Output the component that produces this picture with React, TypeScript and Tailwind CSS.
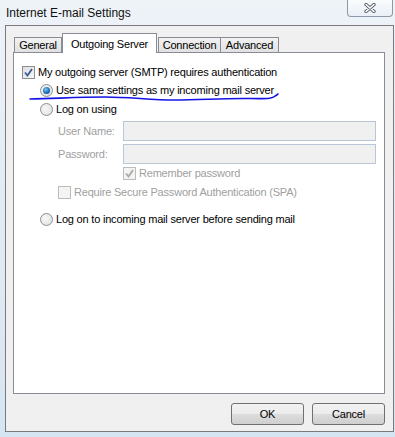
import React from 'react';

const font = { fontFamily: '"Segoe UI", "Liberation Sans", Arial, sans-serif' };

function CheckBox({ checked = false, disabled = false }: { checked?: boolean; disabled?: boolean }) {
  return (
    <div
      className={`w-[13px] h-[13px] shrink-0 border flex items-center justify-center ${
        disabled
          ? 'border-[#bcbcbc] bg-[#f4f4f4]'
          : 'border-[#8e8f8f] bg-[linear-gradient(135deg,#dcdfe3_0%,#f6f6f6_100%)]'
      }`}
    >
      {checked && (
        <svg width="9" height="9" viewBox="0 0 9 9">
          <path
            d="M1 4.5 L3.5 7.5 L8 1"
            fill="none"
            stroke={disabled ? '#a8a8a8' : '#3d5a98'}
            strokeWidth="1.8"
          />
        </svg>
      )}
    </div>
  );
}

function Radio({ selected = false }: { selected?: boolean }) {
  return (
    <div className="w-[13px] h-[13px] shrink-0 rounded-full border border-[#8e8f8f] bg-[radial-gradient(circle_at_40%_40%,#f8f8f8_0%,#d9dcdf_100%)] flex items-center justify-center">
      {selected && (
        <div className="w-[7px] h-[7px] rounded-full bg-[radial-gradient(circle_at_40%_35%,#7fc6f5_0%,#1a6fb5_55%,#0c3f78_100%)]" />
      )}
    </div>
  );
}

function Field() {
  return <div className="w-[253px] h-[20px] border border-[#b7c7d8] bg-[#f0f0f0]" />;
}

export default function App() {
  return (
    <div
      className="relative w-[395px] h-[437px] overflow-hidden bg-[linear-gradient(180deg,#eef3f8_0%,#e3ecf4_40%,#d6e5f2_100%)] text-[11px] tracking-[-0.2px] text-black"
      style={font}
    >
      {/* Title bar */}
      <div className="h-[25px] flex items-start justify-between">
        <div className="pl-[6px] pt-[4px] text-[12px] tracking-normal text-[#111]">Internet E-mail Settings</div>
        <div className="mr-[2px] w-[46px] h-[17px] rounded-b-[4px] border border-t-0 border-[#8d99a8] bg-[linear-gradient(180deg,rgba(255,255,255,0.7),rgba(230,238,246,0.6))] flex items-center justify-center">
          <svg width="14" height="10" viewBox="0 0 14 10">
            <path d="M3 1.5 L11 8.5 M11 1.5 L3 8.5" stroke="#5a6270" strokeWidth="3.4" strokeLinecap="round" />
            <path d="M3 1.5 L11 8.5 M11 1.5 L3 8.5" stroke="#ffffff" strokeWidth="1.6" strokeLinecap="round" />
          </svg>
        </div>
      </div>

      {/* Client area */}
      <div className="ml-[5px] w-[389px] h-[407px] border border-[#7b7b7b] bg-[#f0f0f0] flex flex-col">
        <div className="pl-[7px] pr-[8px] pt-[7px] flex flex-col">
          {/* Tabs */}
          <div className="flex h-[20px] pl-[1px]">
            <div className="mt-[4px] w-[48px] h-[15px] border border-b-0 border-[#898c95] bg-[linear-gradient(180deg,#f2f2f2,#e1e1e1)] flex items-center justify-center">
              General
            </div>
            <div className="relative z-10 w-[95px] h-[20px] border border-b-0 border-[#898c95] bg-white flex items-start justify-center pt-[2px]">
              Outgoing Server
            </div>
            <div className="mt-[4px] ml-[1px] w-[63px] h-[15px] border border-b-0 border-[#898c95] bg-[linear-gradient(180deg,#f2f2f2,#e1e1e1)] flex items-center justify-center">
              Connection
            </div>
            <div className="mt-[4px] w-[58px] h-[15px] border border-b-0 border-l-0 border-[#898c95] bg-[linear-gradient(180deg,#f2f2f2,#e1e1e1)] flex items-center justify-center">
              Advanced
            </div>
          </div>

          {/* Panel */}
          <div className="-mt-px w-[372px] h-[342px] border border-[#898c95] bg-white flex flex-col pl-[8px]">
            <div className="mt-[13px] h-[13px] flex items-center gap-[3px]">
              <CheckBox checked />
              <span>My outgoing server (SMTP) requires authentication</span>
            </div>
            <div className="mt-[5px] h-[13px] flex items-center gap-[3px] pl-[18px]">
              <Radio selected />
              <span>Use same settings as my incoming mail server</span>
            </div>
            <div className="mt-[6px] h-[13px] flex items-center gap-[3px] pl-[18px]">
              <Radio />
              <span>Log on using</span>
            </div>
            <div className="mt-[5px] h-[20px] flex items-center pl-[36px]">
              <span className="w-[65px] text-[#a0a0a0]">User Name:</span>
              <Field />
            </div>
            <div className="mt-[3px] h-[20px] flex items-center pl-[36px]">
              <span className="w-[65px] text-[#a0a0a0]">Password:</span>
              <Field />
            </div>
            <div className="mt-[3px] h-[13px] flex items-center gap-[3px] pl-[101px]">
              <CheckBox checked disabled />
              <span className="text-[#a0a0a0]">Remember password</span>
            </div>
            <div className="mt-[6px] h-[13px] flex items-center gap-[3px] pl-[36px]">
              <CheckBox disabled />
              <span className="text-[#a0a0a0]">Require Secure Password Authentication (SPA)</span>
            </div>
            <div className="mt-[14px] h-[13px] flex items-center gap-[3px] pl-[18px]">
              <Radio />
              <span>Log on to incoming mail server before sending mail</span>
            </div>
          </div>

          {/* Buttons */}
          <div className="mt-[9px] flex justify-end gap-[8px]">
            <button className="w-[73px] h-[22px] rounded-[3px] border border-[#707070] bg-[linear-gradient(180deg,#f2f2f2_0%,#ebebeb_50%,#dddddd_50%,#cfcfcf_100%)] text-[11px]">
              OK
            </button>
            <button className="w-[73px] h-[22px] rounded-[3px] border border-[#707070] bg-[linear-gradient(180deg,#f2f2f2_0%,#ebebeb_50%,#dddddd_50%,#cfcfcf_100%)] text-[11px]">
              Cancel
            </button>
          </div>
        </div>
      </div>

      {/* Hand-drawn underline annotation */}
      <svg className="absolute left-0 top-0 pointer-events-none" width="395" height="437">
        <path
          d="M30 99 C 55 98.5, 80 97, 105 97 S 150 100, 175 100 S 225 98, 250 98.5 S 272 98, 278 94"
          fill="none"
          stroke="#1414e6"
          strokeWidth="1.6"
          strokeLinecap="round"
        />
      </svg>
    </div>
  );
}
